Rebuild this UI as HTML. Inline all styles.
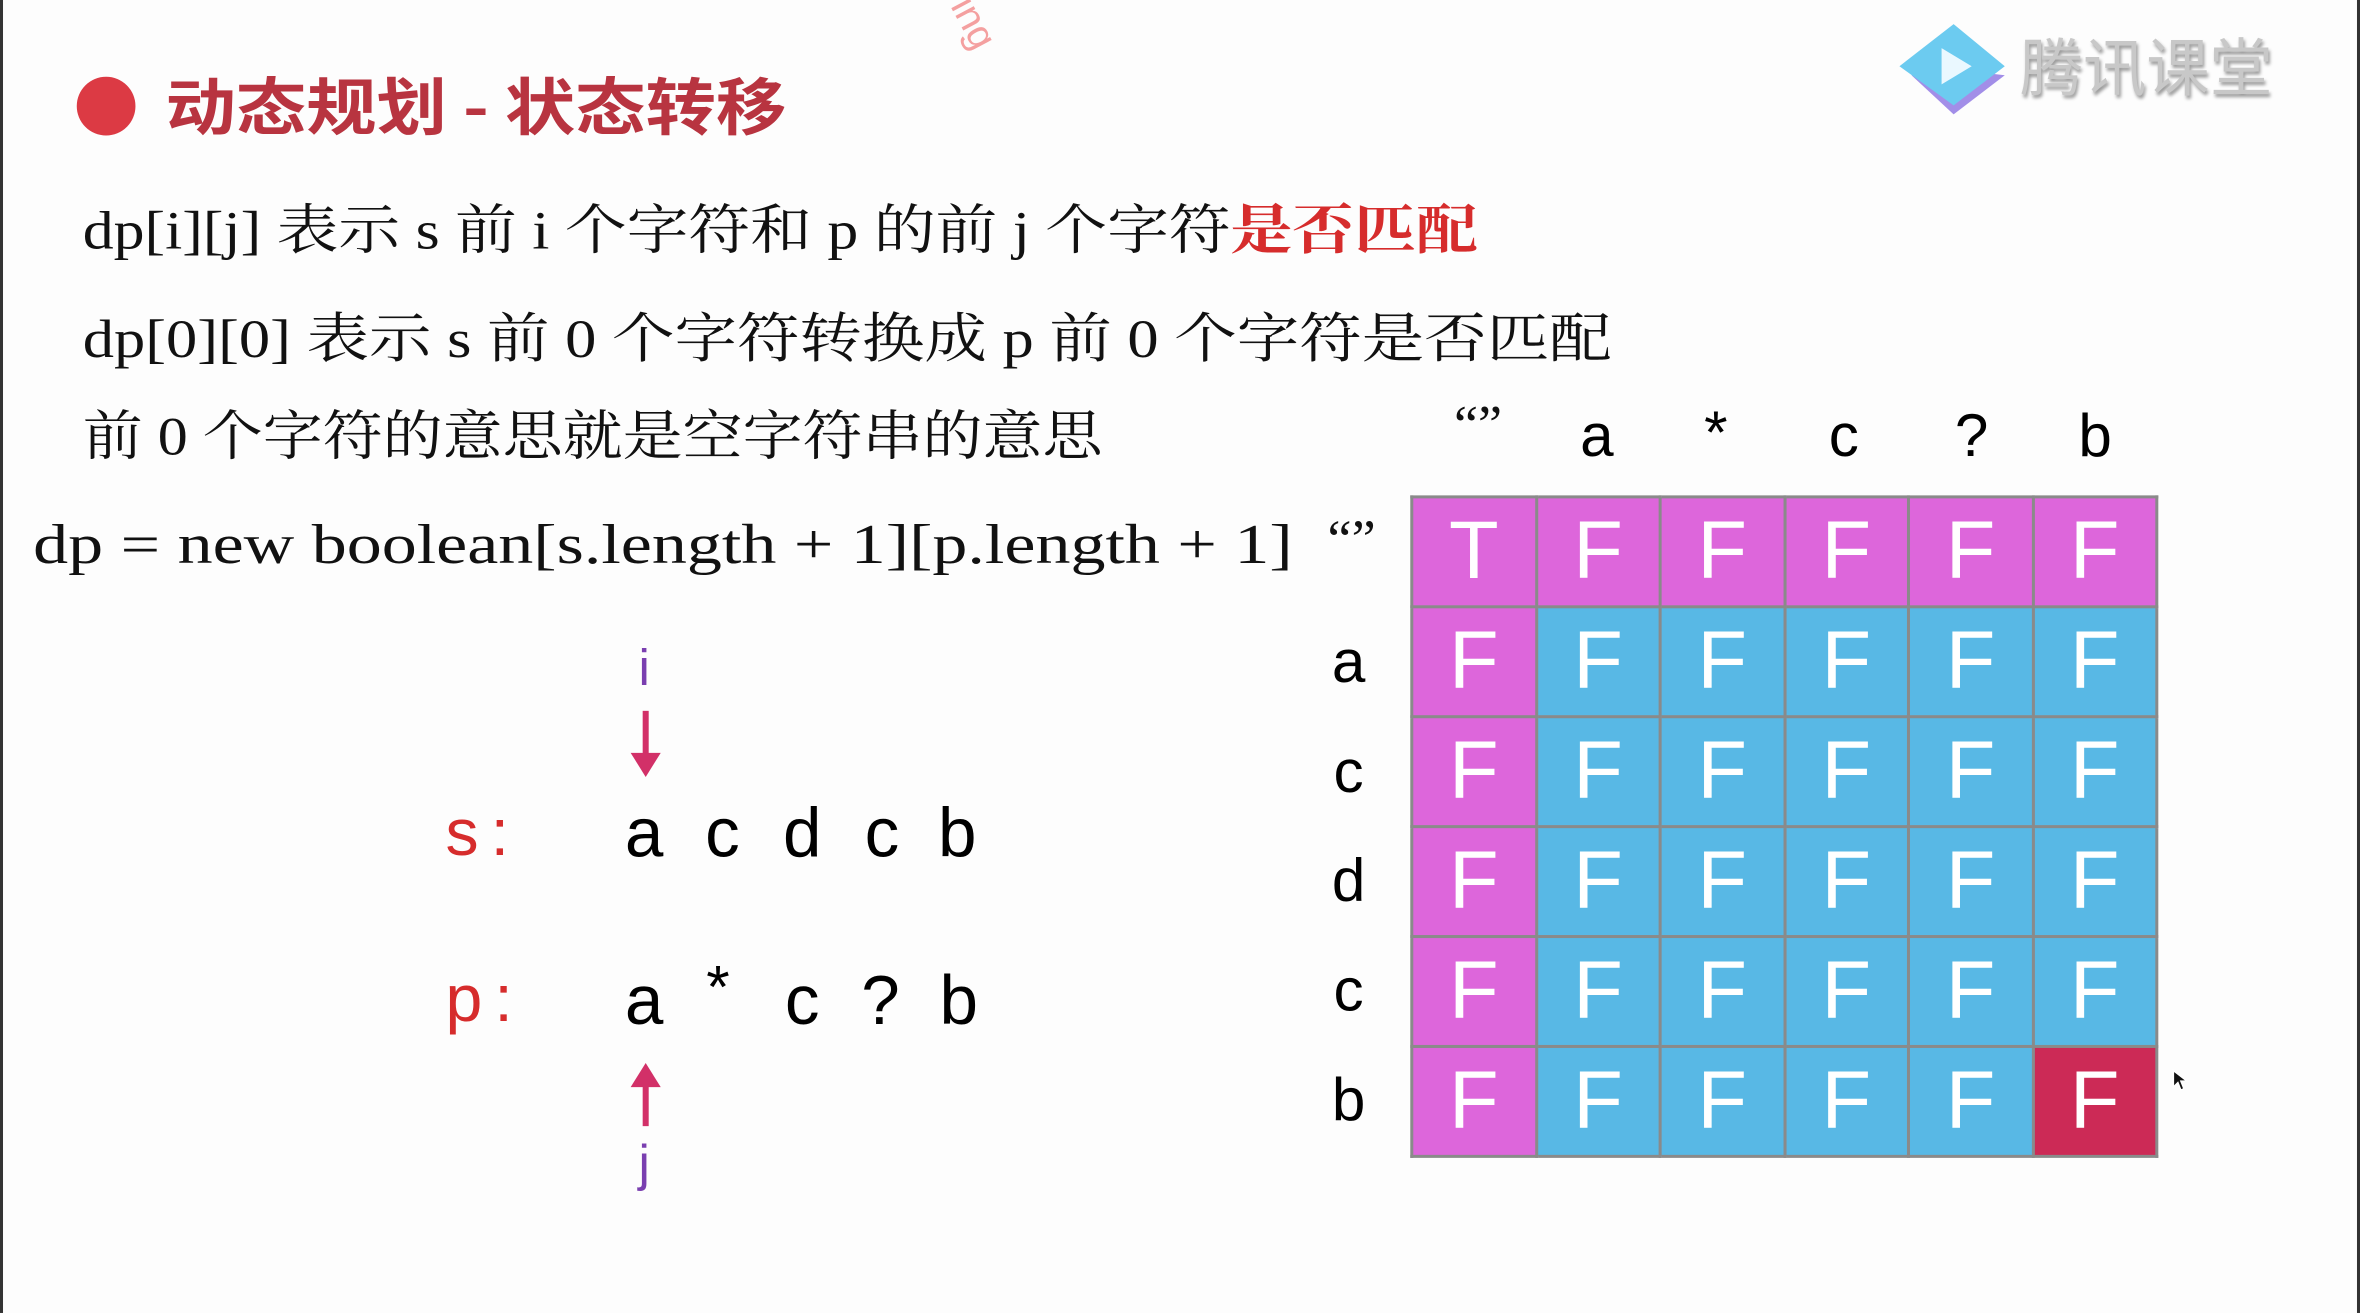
<!DOCTYPE html>
<html><head><meta charset="utf-8"><style>
html,body{margin:0;padding:0;background:#fff;overflow:hidden}
#w{position:relative;width:2360px;height:1313px;overflow:hidden;background:#fdfdfd}
#s{position:absolute;left:0;top:0;width:1568px;height:872px;transform:scale(1.5051,1.5057);transform-origin:0 0}
.a{position:absolute;white-space:nowrap;line-height:1}
.cj{font-family:"Liberation Serif","Noto Serif CJK SC",serif;font-size:36px;color:#111;transform-origin:0 0}
.sn{font-family:"Liberation Sans",sans-serif}
.c{transform:translateX(-50%)}
table{position:absolute;left:937px;top:329px;border-collapse:collapse;width:497px;table-layout:fixed}
td{height:71px;border:2px solid #8a8a8a;padding:0;text-align:center;color:#fff;font-family:"Liberation Sans",sans-serif;font-size:54px;line-height:71px}
.p{background:#dd66db}.b{background:#58b8e5}.r{background:#cc2a56}
</style></head><body><div id="w"><div id="s">
<div class="a" style="left:0;top:0;width:2px;height:872px;background:#333"></div>
<div class="a" style="left:1566px;top:0;width:2px;height:872px;background:#333"></div>
<div class="a sn" style="left:630px;top:2px;transform:rotate(62deg);color:#f4a0a0;font-size:26px">ing</div>
<div class="a" style="left:51px;top:51px;width:39px;height:39px;border-radius:50%;background:#dc3a44"></div>
<div class="a" style="left:110px;top:48px;font-family:'Noto Sans CJK SC',sans-serif;font-weight:bold;font-size:41px;color:#b83440;transform:scaleX(1.14);transform-origin:0 0">动态规划 - 状态转移</div>
<svg class="a" style="left:1260px;top:14px" width="76" height="64" viewBox="0 0 76 64"><path d="M38 32 L72 36 L38 62 L10 36Z" fill="#a28ee8"/><path d="M38 2 L72 30 L38 56 L2 30Z" fill="#6ccbf0"/><path d="M30 18 L50 30 L30 42Z" fill="#eaf8ff"/></svg>
<div class="a" style="left:1342px;top:22px;font-family:'Noto Sans CJK SC',sans-serif;font-size:42px;color:#c8c8c8;text-shadow:1px 2px 2px #999">腾讯课堂</div>
<div class="a cj" style="left:55px;top:135px;transform:scaleX(1.14)">dp[i][j] 表示 s 前 i 个字符和 p 的前 j 个字符<span style="color:#d62c2c;font-weight:bold">是否匹配</span></div>
<div class="a cj" style="left:55px;top:207px;transform:scaleX(1.153)">dp[0][0] 表示 s 前 0 个字符转换成 p 前 0 个字符是否匹配</div>
<div class="a cj" style="left:55px;top:272px;transform:scaleX(1.107)">前 0 个字符的意思就是空字符串的意思</div>
<div class="a cj" style="left:22px;top:344px;font-size:37px;transform:scaleX(1.257)">dp = new boolean[s.length + 1][p.length + 1]</div>
<div class="a cj c" style="left:898px;top:340px;font-size:36px">“”</div>
<div class="a cj c" style="left:982px;top:264px;font-size:36px">“”</div>
<div class="a sn c" style="left:1061px;top:270px;font-size:40px">a</div>
<div class="a sn c" style="left:1140px;top:268px;font-size:40px">*</div>
<div class="a sn c" style="left:1225px;top:270px;font-size:40px">c</div>
<div class="a sn c" style="left:1310px;top:270px;font-size:40px">?</div>
<div class="a sn c" style="left:1392px;top:270px;font-size:40px">b</div>
<div class="a sn c" style="left:896px;top:420px;font-size:40px">a</div>
<div class="a sn c" style="left:896px;top:493px;font-size:40px">c</div>
<div class="a sn c" style="left:896px;top:565px;font-size:40px">d</div>
<div class="a sn c" style="left:896px;top:638px;font-size:40px">c</div>
<div class="a sn c" style="left:896px;top:711px;font-size:40px">b</div>
<table>
<tr><td class="p">T</td><td class="p">F</td><td class="p">F</td><td class="p">F</td><td class="p">F</td><td class="p">F</td></tr>
<tr><td class="p">F</td><td class="b">F</td><td class="b">F</td><td class="b">F</td><td class="b">F</td><td class="b">F</td></tr>
<tr><td class="p">F</td><td class="b">F</td><td class="b">F</td><td class="b">F</td><td class="b">F</td><td class="b">F</td></tr>
<tr><td class="p">F</td><td class="b">F</td><td class="b">F</td><td class="b">F</td><td class="b">F</td><td class="b">F</td></tr>
<tr><td class="p">F</td><td class="b">F</td><td class="b">F</td><td class="b">F</td><td class="b">F</td><td class="b">F</td></tr>
<tr><td class="p">F</td><td class="b">F</td><td class="b">F</td><td class="b">F</td><td class="b">F</td><td class="r">F</td></tr>
</table>
<svg class="a" style="left:1443px;top:710px" width="12" height="16" viewBox="0 0 12 16"><path d="M1 1 L1 12 L4 9 L6 14 L8 13 L6 8 L10 8Z" fill="#111" stroke="#fff" stroke-width="1"/></svg>
<div class="a sn c" style="left:428px;top:427px;font-size:34px;color:#7a3fb0">i</div>
<svg class="a" style="left:418px;top:472px" width="22" height="46" viewBox="0 0 22 46"><rect x="9" y="0" width="4" height="30" fill="#d23068"/><path d="M1 28 L21 28 L11 44Z" fill="#d23068"/></svg>
<div class="a sn" style="left:296px;top:532px;font-size:44px;color:#d62c2c;letter-spacing:8px">s:</div>
<div class="a sn" style="left:296px;top:642px;font-size:44px;color:#d62c2c;letter-spacing:8px">p:</div>
<div class="a sn c" style="left:428px;top:530px;font-size:46px">a</div>
<div class="a sn c" style="left:480px;top:530px;font-size:46px">c</div>
<div class="a sn c" style="left:533px;top:530px;font-size:46px">d</div>
<div class="a sn c" style="left:586px;top:530px;font-size:46px">c</div>
<div class="a sn c" style="left:636px;top:530px;font-size:46px">b</div>
<div class="a sn c" style="left:428px;top:641px;font-size:46px">a</div>
<div class="a sn c" style="left:477px;top:636px;font-size:40px">*</div>
<div class="a sn c" style="left:533px;top:641px;font-size:46px">c</div>
<div class="a sn c" style="left:585px;top:641px;font-size:46px">?</div>
<div class="a sn c" style="left:637px;top:641px;font-size:46px">b</div>
<svg class="a" style="left:418px;top:704px" width="22" height="44" viewBox="0 0 22 44"><path d="M1 18 L21 18 L11 2Z" fill="#d23068"/><rect x="9" y="16" width="4" height="28" fill="#d23068"/></svg>
<div class="a sn c" style="left:428px;top:756px;font-size:34px;color:#7a3fb0">j</div>
</div></div></body></html>
